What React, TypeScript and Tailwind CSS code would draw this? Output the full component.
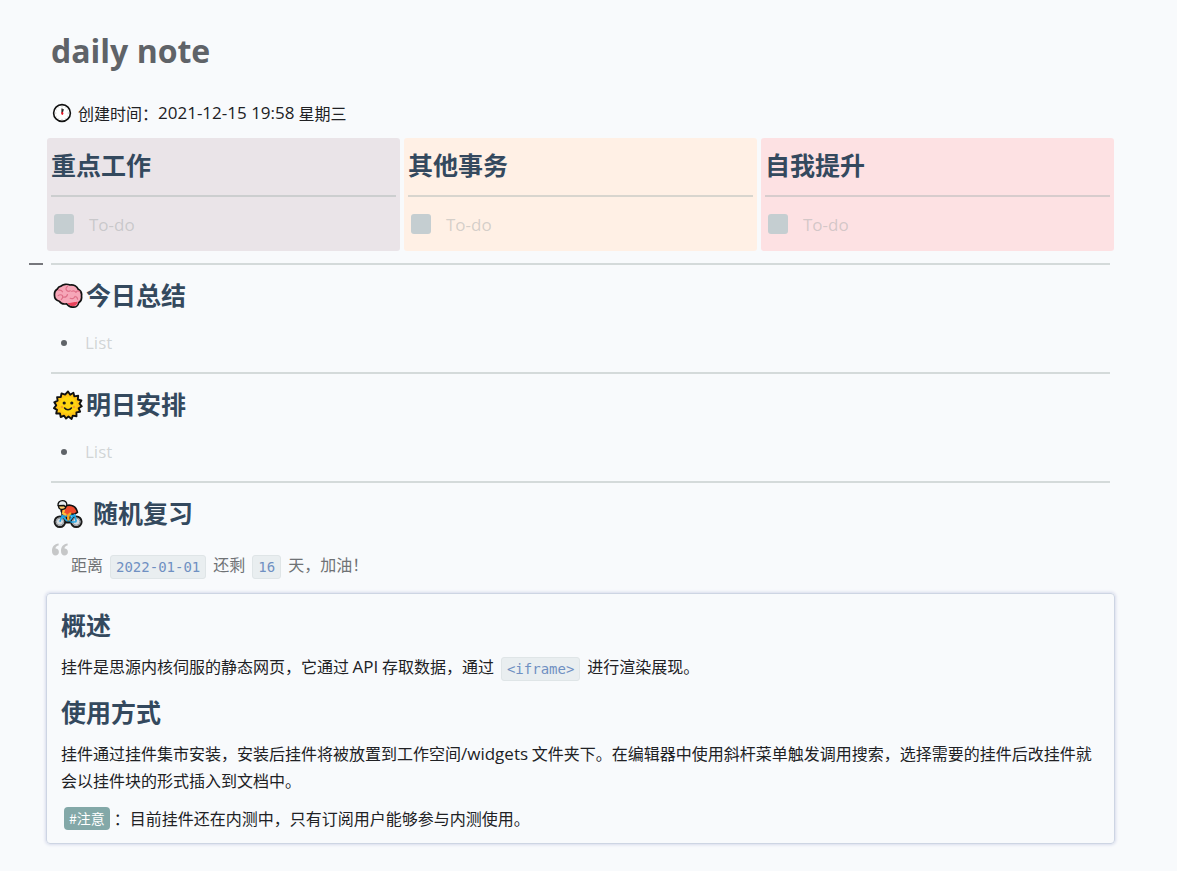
import type { ReactNode } from "react";

const latin = "font-['Open_Sans','Noto_Sans_CJK_SC',sans-serif] text-[17px]";

function ClockIcon() {
  return (
    <svg viewBox="0 0 20 20" className="size-5" aria-hidden="true">
      <circle cx="10" cy="10" r="8.4" fill="#fff" stroke="#111" strokeWidth="1.6" />
      <g fill="#9a9a9a">
        <circle cx="10" cy="3.8" r=".5" />
        <circle cx="16.2" cy="10" r=".5" />
        <circle cx="10" cy="16.2" r=".5" />
        <circle cx="3.8" cy="10" r=".5" />
        <circle cx="13.1" cy="4.6" r=".4" />
        <circle cx="15.4" cy="6.9" r=".4" />
        <circle cx="15.4" cy="13.1" r=".4" />
        <circle cx="13.1" cy="15.4" r=".4" />
        <circle cx="6.9" cy="15.4" r=".4" />
        <circle cx="4.6" cy="13.1" r=".4" />
        <circle cx="4.6" cy="6.9" r=".4" />
        <circle cx="6.9" cy="4.6" r=".4" />
      </g>
      <path d="M10 5.800v4M10.200 9.800l1-3.300" stroke="#2a2a2a" strokeWidth="1.200" strokeLinecap="round" />
      <ellipse cx="10.300" cy="10.300" rx="1" ry="1.600" fill="#e81224" />
    </svg>
  );
}

function BrainIcon() {
  return (
    <svg viewBox="0 0 30 30" className="size-[30px]" aria-hidden="true">
      <path
        d="M8 5.200C10 3.200 14 2.600 17 4c3.500-.6 7 1.400 8.300 4.300 2.300 1.300 3.700 3.900 3.200 6.700.5 3-.7 5.400-2.800 6.800-.6 3-3.200 4.800-6.200 4.300-2.400.2-4.400-1.200-6-3.300-3.200.6-5.900-.4-7.200-2.500C3 19.400 1.300 16.900 1.500 14c-.3-2.600.9-4.700 2.600-5.700C4.800 6.700 6.200 5.500 8 5.200Z"
        fill="#f6a6b8"
        stroke="#111"
        strokeWidth="1.700"
        strokeLinejoin="round"
      />
      <path
        d="M14.400 22c2.500.3 4.300-.9 6.200-.8 1.700 0 2.800-.4 4.200-.4-.7 2.800-2.600 4.500-5.200 4.300-2.200 0-3.800-1.100-5.200-3.100Z"
        fill="#e8415a"
      />
      <path
        d="M5.500 9.200c1.800-.4 3.300.3 4 1.600M14.500 5.500c-1.700 1-2 2.800-.7 4 .9.900 2.400 1 3.500.3M9.500 14.700c-1-1.200-2.900-1.300-4.300-.1M9.600 14.800c.4 1.600-.2 2.900-1.300 3.700M14.500 13.500c-.5 2-2 2.900-4 2.600M18.700 10.300c1.800-.8 3.400-.2 4.300 1.100M23 11.200c1-1.500 2.600-1.600 3.700-.6M17.200 17.300c2 .9 4.100.1 4.800-1.900M22 15.500c1.500.2 2.500 1.200 2.600 2.700"
        fill="none"
        stroke="#df7089"
        strokeWidth="1.200"
        strokeLinecap="round"
      />
    </svg>
  );
}

function SunIcon() {
  return (
    <svg viewBox="0 0 30 30" className="size-[30px]" aria-hidden="true">
      <path
        d="m15 1.500 2.200 3.200 3.200-2 1 3.700 3.800-.6-.4 3.700 3.600 1-1.900 3.200 2.300 2.600-3.100 2 1.400 3.400-3.700.7.100 3.900-3.700-.7-1.200 3.400L15.500 26.500 13 28.600l-1.900-2.900-3.400 1.300-.7-3.600-3.800.1.800-3.700-3-1.700 2.200-2.800-1.900-3 3.300-1.600-.5-3.600 3.700-.1.700-3.600 3.600 1.200Z"
        fill="#ffc414"
        stroke="#111"
        strokeWidth="1.900"
        strokeLinejoin="round"
      />
      <circle cx="15" cy="15.200" r="8.500" fill="#ffd60f" />
      <circle cx="11.200" cy="13" r="1.600" fill="#1a1a1a" />
      <circle cx="18.800" cy="13" r="1.600" fill="#1a1a1a" />
      <circle cx="8.900" cy="17" r="1.300" fill="#f8a12b" />
      <circle cx="21.100" cy="17" r="1.300" fill="#f8a12b" />
      <path d="M11.600 18c1.700 2.300 5.100 2.300 6.800 0" fill="none" stroke="#1a1a1a" strokeWidth="1.600" strokeLinecap="round" />
    </svg>
  );
}

function BikerIcon() {
  return (
    <svg viewBox="0 0 30 30" className="size-[30px]" aria-hidden="true">
      <g fill="#d6dade" stroke="#1c1c1c" strokeWidth="2">
        <circle cx="6.900" cy="22.700" r="5.300" />
        <circle cx="23.300" cy="22.700" r="5.300" />
      </g>
      <g fill="none" stroke="#8b9196" strokeWidth="1">
        <circle cx="6.900" cy="22.700" r="3.600" />
        <circle cx="23.300" cy="22.700" r="3.600" />
      </g>
      <path
        d="M9 13.500c-1.300-1.200-1-3.300.8-4.700 2-1.900 5.600-3.200 8.900-2.300 3.300.8 5 3.400 5.800 6.900l-3.200 1.900-4.300-.3-.2 6.800-3.200.2-.5-4.500-4-.2Z"
        fill="#ef4b2d"
        stroke="#111"
        strokeWidth="1.600"
        strokeLinejoin="round"
      />
      <path d="M6.900 22.700 9.700 15.700M9.300 17.200l12.200-.8M9.300 17.200l6 5.900 6.300-7.600 1.700 7.200M15.300 23.100l8 -.4" fill="none" stroke="#1fa8e8" strokeWidth="1.600" strokeLinejoin="round" />
      <path d="m11 11-1 3.300 2.500 1.200" fill="none" stroke="#fcbf3c" strokeWidth="2.200" strokeLinecap="round" strokeLinejoin="round" />
      <path d="m18 14-2.800 2.300.3 5.200" fill="none" stroke="#f6a623" strokeWidth="2.300" strokeLinejoin="round" />
      <path d="M13.200 23.500h3.600" stroke="#111" strokeWidth="1.800" strokeLinecap="round" />
      <path d="M5.500 6.500c0 2.500 1.400 4 3.600 4s4-1.600 4-4.200Z" fill="#ffcf6e" stroke="#111" strokeWidth="1.300" />
      <path d="M5 6.700C4.700 3.600 6.600 1.700 9.400 1.700c2.700 0 4.400 1.900 4.500 4.400L12.500 8l-1.700-1.700Z" fill="#e9edf0" stroke="#111" strokeWidth="1.300" strokeLinejoin="round" />
    </svg>
  );
}

function QuoteMark() {
  return (
    <svg viewBox="0 0 16 13" className="absolute -top-2 left-px h-[13px] w-4" aria-hidden="true">
      <path
        d="M6.600.4v2.200C4.800 2.800 3.600 3.900 3.500 5.600h.2c1.900 0 3.200 1.400 3.200 3.300 0 2-1.500 3.600-3.400 3.600C1.300 12.500 0 10.800 0 8 0 3.600 2.400.7 6.600.4ZM15.600.4v2.200c-1.800.2-3 1.300-3.100 3h.2c1.900 0 3.200 1.400 3.200 3.300 0 2-1.500 3.600-3.400 3.600C10.300 12.500 9 10.800 9 8c0-4.400 2.400-7.300 6.600-7.600Z"
        fill="#c6c7c8"
      />
    </svg>
  );
}

function Heading({ children }: { children: ReactNode }) {
  return <h2 className="flex h-9 items-start text-[25px] font-bold leading-8 text-[#34495e]">{children}</h2>;
}

function Rule({ className }: { className: string }) {
  return <hr className={`h-0.5 border-0 bg-[#a8b3b2]/45 ${className}`} />;
}

function Code({ children }: { children: ReactNode }) {
  return (
    <code className="mx-[7px] inline-block rounded-[3px] border border-[#dfe5e7] bg-[#e9eef0] px-[5px] align-middle font-['DejaVu_Sans_Mono',monospace] text-[14px] leading-[22px] text-[#6f90c2]">
      {children}
    </code>
  );
}

function TaskCard({ id, title, color }: { id: string; title: string; color: string }) {
  return (
    <section className={`flex-1 rounded-[3px] px-1 pt-2.5 pb-[13px] ${color}`}>
      <Heading>{title}</Heading>
      <Rule className="mt-[11px]" />
      <div className="mt-[15px] flex h-[26px] items-center">
        <input id={id} type="checkbox" className="mx-[3px] mb-0.5 size-5 appearance-none rounded-[3px] bg-[#c5ced1]" />
        <label htmlFor={id} className="ml-3 font-['Open_Sans',sans-serif] text-[17px] leading-[26px] text-[#a0a6a6]/45">
          To-do
        </label>
      </div>
    </section>
  );
}

function ListSection({ icon, title }: { icon: ReactNode; title: string }) {
  return (
    <section className="mt-[13px]">
      <Heading>
        <span className="ml-0.5 mr-[3px] self-center">{icon}</span>
        {title}
      </Heading>
      <ul className="mt-4">
        <li className="flex h-[26px] items-center">
          <span className="ml-2.5 mr-[18px] size-1.5 rounded-full bg-[#5f6368]" />
          <span className="font-['Open_Sans',sans-serif] text-[17px] leading-[26px] text-[#a0a6a6]/45">List</span>
        </li>
      </ul>
    </section>
  );
}

export default function App() {
  return (
    <main className="min-h-screen bg-[#f8fafc] pt-7 pr-[67px] pb-[27px] pl-[51px] font-['Noto_Sans_CJK_SC',sans-serif] text-base leading-[26px] text-[#202124]">
      <h1 className="font-['Open_Sans',sans-serif] text-[32px] font-bold leading-[46px] text-[#5f6368]">daily note</h1>

      <p className="mt-[26px] flex items-center">
        <span className="mr-1.5 ml-px">
          <ClockIcon />
        </span>
        创建时间：<time className={latin}>2021-12-15 19:58</time>
        <span className="ml-1">星期三</span>
      </p>

      <div className="-mx-1 mt-3 flex gap-1">
        <TaskCard id="focus" title="重点工作" color="bg-[#eae4e8]" />
        <TaskCard id="other" title="其他事务" color="bg-[#fff0e5]" />
        <TaskCard id="growth" title="自我提升" color="bg-[#fde1e3]" />
      </div>

      <div className="relative mt-3">
        <span className="absolute top-0 -left-[22px] h-0.5 w-3.5 bg-[#76777c]" />
        <Rule className="" />
      </div>
      <ListSection icon={<BrainIcon />} title="今日总结" />
      <Rule className="mt-4" />
      <ListSection icon={<SunIcon />} title="明日安排" />
      <Rule className="mt-4" />

      <section className="mt-[13px]">
        <Heading>
          <span className="mr-2.5 ml-0.5 self-center">
            <BikerIcon />
          </span>
          随机复习
        </Heading>
        <blockquote className="relative mt-[19px] h-7 pl-5 text-[#6f7275]">
          <QuoteMark />
          距离<Code>2022-01-01</Code>还剩<Code>16</Code>天，加油！
        </blockquote>
      </section>

      <section className="-mx-[5px] mt-3.5 rounded-[4px] border border-[#cdd5e3] px-3.5 pt-3.5 pb-3 shadow-[0_0_3px_1px_#d8dcec]">
        <Heading>概述</Heading>
        <p className="mt-[9px] h-[26px]">
          挂件是思源内核伺服的静态网页，它通过 <span className={latin}>API</span> 存取数据，通过
          <Code>&lt;iframe&gt;</Code>进行渲染展现。
        </p>
        <div className="mt-4">
          <Heading>使用方式</Heading>
        </div>
        <p className="mt-[9px]">
          挂件通过挂件集市安装，安装后挂件将被放置到工作空间<span className={latin}>/widgets</span>{" "}
          文件夹下。在编辑器中使用斜杆菜单触发调用搜索，选择需要的挂件后改挂件就会以挂件块的形式插入到文档中。
        </p>
        <p className="mt-3 flex items-center">
          <a href="#note" className="mr-1 ml-[3px] rounded-[4px] bg-[#83a8a8] px-[5px] text-[14px] leading-[23px] text-white">
            #注意
          </a>
          ：目前挂件还在内测中，只有订阅用户能够参与内测使用。
        </p>
      </section>
    </main>
  );
}
